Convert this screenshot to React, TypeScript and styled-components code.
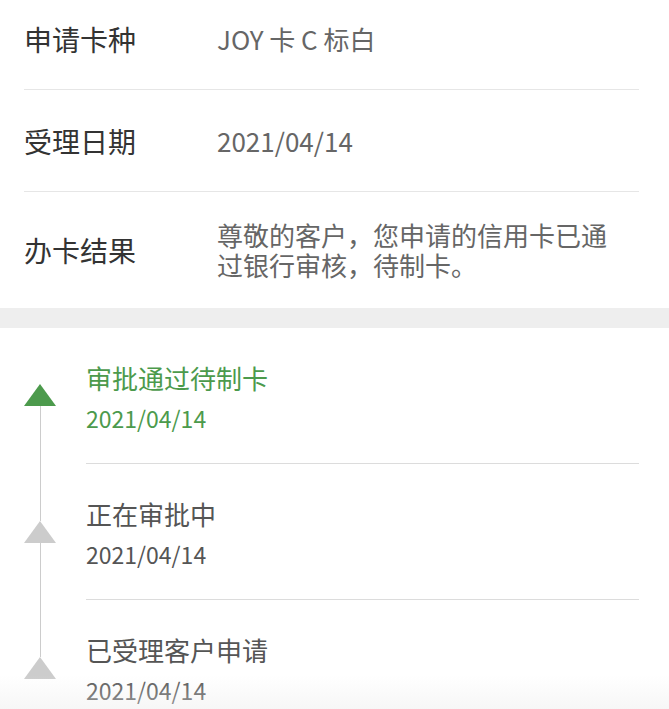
import React from "react";
import styled, { createGlobalStyle } from "styled-components";

const GlobalStyle = createGlobalStyle`
  html, body {
    margin: 0;
    padding: 0;
    background: #ffffff;
    overflow: hidden;
    font-family: "Noto Sans CJK SC", "Noto Sans", sans-serif;
  }
  * { box-sizing: border-box; }
`;

const Page = styled.div`
  width: 669px;
  height: 709px;
  overflow: hidden;
  position: relative;
  background: #ffffff;
`;

const InfoSection = styled.section`
  margin-top: -12px;
  padding: 0 30px 0 24px;
  background: #ffffff;
`;

const InfoRow = styled.div<{ $last?: boolean }>`
  display: flex;
  align-items: center;
  min-height: 102px;
  padding: 28px 0;
  border-bottom: ${(p) => (p.$last ? "none" : "1px solid #e6e6e6")};
`;

const Label = styled.div`
  width: 193px;
  flex-shrink: 0;
  font-size: 28px;
  line-height: 30px;
  color: #333333;
`;

const Value = styled.div`
  flex: 1;
  padding-right: 20px;
  font-size: 26px;
  line-height: 30px;
  color: #666666;
`;

const Band = styled.div`
  height: 20px;
  background: #eeeeee;
`;

const Timeline = styled.section`
  background: #ffffff;
`;

const Step = styled.div`
  display: flex;
  align-items: stretch;
`;

const Rail = styled.div`
  width: 86px;
  flex-shrink: 0;
  padding-left: 24px;
  display: flex;
  flex-direction: column;
`;

const RailTrack = styled.div`
  width: 32px;
  flex: 1;
  display: flex;
  flex-direction: column;
  align-items: center;
`;

const Connector = styled.div<{ $visible: boolean; $fixed?: number }>`
  width: 1px;
  background: ${(p) => (p.$visible ? "#cccccc" : "transparent")};
  ${(p) => (p.$fixed !== undefined ? `height: ${p.$fixed}px; flex-shrink: 0;` : "flex: 1;")}
`;

const Triangle = styled.div<{ $active: boolean }>`
  width: 0;
  height: 0;
  flex-shrink: 0;
  border-left: 16px solid transparent;
  border-right: 16px solid transparent;
  border-bottom: 22px solid ${(p) => (p.$active ? "#4c9a4c" : "#cccccc")};
`;

const StepBody = styled.div<{ $last?: boolean }>`
  flex: 1;
  margin-right: 30px;
  padding: 32px 0 30px;
  border-bottom: ${(p) => (p.$last ? "none" : "1px solid #dcdcdc")};
  display: flex;
  flex-direction: column;
  gap: 7px;
`;

const StepTitle = styled.div<{ $active: boolean }>`
  font-size: 26px;
  line-height: 36px;
  color: ${(p) => (p.$active ? "#4c9a4c" : "#555555")};
`;

const StepDate = styled.div<{ $active: boolean }>`
  font-size: 23px;
  line-height: 30px;
  color: ${(p) => (p.$active ? "#4c9a4c" : "#555555")};
`;

const BottomShade = styled.div`
  position: absolute;
  left: 0;
  right: 0;
  bottom: 0;
  height: 34px;
  pointer-events: none;
  background: linear-gradient(to bottom, rgba(238, 238, 238, 0), rgba(236, 236, 236, 0.45));
`;

const info = [
  { label: "申请卡种", value: "JOY 卡 C 标白" },
  { label: "受理日期", value: "2021/04/14" },
  { label: "办卡结果", value: "尊敬的客户，您申请的信用卡已通过银行审核，待制卡。" },
];

const steps = [
  { title: "审批通过待制卡", date: "2021/04/14", active: true },
  { title: "正在审批中", date: "2021/04/14", active: false },
  { title: "已受理客户申请", date: "2021/04/14", active: false },
];

export default function App() {
  return (
    <>
      <GlobalStyle />
      <Page>
        <InfoSection>
          {info.map((row, i) => (
            <InfoRow key={row.label} $last={i === info.length - 1}>
              <Label>{row.label}</Label>
              <Value>{row.value}</Value>
            </InfoRow>
          ))}
        </InfoSection>
        <Band />
        <Timeline>
          {steps.map((s, i) => (
            <Step key={s.title}>
              <Rail>
                <RailTrack>
                  <Connector $visible={i > 0} $fixed={i === 0 ? 56 : 57} />
                  <Triangle $active={s.active} />
                  <Connector $visible={i < steps.length - 1} />
                </RailTrack>
              </Rail>
              <StepBody $last={i === steps.length - 1}>
                <StepTitle $active={s.active}>{s.title}</StepTitle>
                <StepDate $active={s.active}>{s.date}</StepDate>
              </StepBody>
            </Step>
          ))}
        </Timeline>
        <BottomShade />
      </Page>
    </>
  );
}
